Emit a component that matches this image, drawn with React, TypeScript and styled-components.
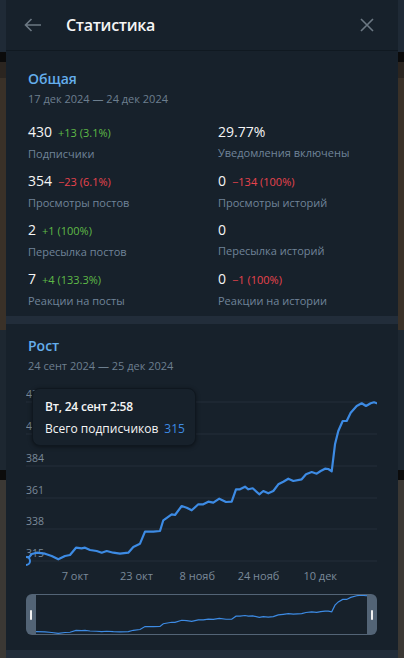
import styled, { createGlobalStyle } from "styled-components";

const GlobalStyle = createGlobalStyle`
  html, body {
    margin: 0;
    padding: 0;
    height: 100%;
    overflow: hidden;
  }

  body {
    font-family: "Open Sans", "DejaVu Sans", sans-serif;
    background: linear-gradient(
      #1f2a36 0 52px,
      #0b0b0b 52px 62px,
      #2b2520 62px 78px,
      #3a3128 78px 330px,
      #1d2731 330px 470px,
      #0c0c0c 470px 480px,
      #3b3834 480px
    );
  }
`;

const BLUE = "#3d8be4";
const PANEL = "#17212b";
const MUTED = "#708499";

const Page = styled.div`
  display: flex;
  justify-content: center;
  height: 658px;
`;

const Panel = styled.div`
  width: 392px;
  background: ${PANEL};
  display: flex;
  flex-direction: column;
  overflow: hidden;
`;

const Header = styled.header`
  height: 52px;
  display: flex;
  align-items: center;
  padding: 0 20px 0 16px;
  border-bottom: 1px solid #101921;
`;

const IconButton = styled.button`
  width: 22px;
  height: 22px;
  padding: 0;
  border: none;
  background: transparent;
  display: flex;
  align-items: center;
  justify-content: center;
  color: #6c7883;
  cursor: pointer;
`;

const Title = styled.h1`
  flex: 1;
  margin: 0 0 0 22px;
  font-size: 16px;
  letter-spacing: -0.3px;
  font-weight: 600;
  color: #f5f5f5;
  line-height: 22px;
`;

const Section = styled.section<{ $top: number }>`
  padding: ${(p) => p.$top}px 0 0;
`;

const SectionTitle = styled.h2`
  margin: 0;
  padding: 0 22px;
  font-size: 14px;
  font-weight: 600;
  line-height: 20px;
  color: #64aeec;
`;

const DateRange = styled.div`
  margin-top: 1px;
  padding: 0 22px;
  font-size: 11px;
  line-height: 17px;
  color: #6d7f8f;
`;

const StatsGrid = styled.div`
  display: grid;
  grid-template-columns: 190px 1fr;
  row-gap: 9px;
  padding: 0 22px 7px;
  margin-top: 15px;
`;

const Stat = styled.div`
  display: flex;
  flex-direction: column;
`;

const StatValue = styled.div`
  display: flex;
  align-items: baseline;
  gap: 6px;
  font-size: 14px;
  line-height: 20px;
  color: #f5f5f5;
`;

const Change = styled.span<{ $negative?: boolean }>`
  font-size: 11px;
  color: ${(p) => (p.$negative ? "#e8434d" : "#5fba47")};
`;

const StatLabel = styled.div`
  margin-top: 2px;
  font-size: 11px;
  line-height: 17px;
  color: ${MUTED};
`;

const SectionGap = styled.div`
  height: 8px;
  background: #222d3a;
  flex-shrink: 0;
`;

const ChartWrap = styled.div`
  position: relative;
  margin: 12px 21px 0 20px;
  height: 200px;
`;

const AxisText = styled.text<{ $size: number }>`
  font-family: "Open Sans", "DejaVu Sans", sans-serif;
  font-size: ${(p) => p.$size}px;
  fill: #7b8a9a;
`;

const Tooltip = styled.div`
  position: absolute;
  left: 6px;
  top: 2px;
  width: 164px;
  box-sizing: border-box;
  padding: 9px 12px 8px;
  background: ${PANEL};
  border: 1px solid #0f171f;
  border-radius: 8px;
  box-shadow: 0 1px 4px rgba(0, 0, 0, 0.45);
  color: #f5f5f5;
  font-size: 12px;
  line-height: 17px;
`;

const TooltipTitle = styled.div`
  font-weight: 600;
  letter-spacing: -0.2px;
`;

const TooltipRow = styled.div`
  margin-top: 5px;
  display: flex;
  gap: 6px;
  white-space: nowrap;
`;

const TooltipValue = styled.span`
  color: ${BLUE};
`;

const Navigator = styled.div`
  display: flex;
  height: 41px;
  margin: 8px 21px 15px 20px;
`;

const Handle = styled.div<{ $side: "left" | "right" }>`
  width: 10px;
  background: #536476;
  border-radius: ${(p) => (p.$side === "left" ? "6px 0 0 6px" : "0 6px 6px 0")};
  display: flex;
  align-items: center;
  justify-content: center;

  &::after {
    content: "";
    width: 2px;
    height: 10px;
    border-radius: 1px;
    background: #f2f2f2;
  }
`;

const NavWindow = styled.div`
  flex: 1;
  border-top: 1px solid #536476;
  border-bottom: 1px solid #536476;
  display: flex;

  svg {
    width: 100%;
    height: 39px;
    display: block;
  }
`;

// chart points in px, relative to the chart box (351 x 200)
const POINTS: [number, number][] = [
  [0, 175], [5.7, 168], [10.7, 166.7], [19, 167.7], [25.7, 170], [32.3, 173.3],
  [39, 170], [44, 169], [50, 161.7], [55.7, 162.3], [59, 161.7], [64, 164],
  [70.7, 165], [75.7, 166.7], [80.7, 165], [87.3, 166.7], [94, 167.7],
  [102.3, 166.7], [107.3, 161], [114, 157.7], [119, 145.7], [127.3, 145.7],
  [134, 145], [137.3, 134.3], [145.7, 128.3], [149, 129], [155.7, 120],
  [160.7, 121.7], [165.7, 124.3], [172.3, 118.3], [177.3, 118.3], [182.3, 115.7],
  [187.3, 116.7], [193.3, 112.7], [200, 116], [205.7, 115.7], [210, 103.3],
  [214, 103.3], [219, 100.7], [222.3, 103.3], [226.7, 102.3], [233.3, 108.3],
  [237.3, 105], [242.3, 107.3], [247.3, 105], [252.3, 98.3], [257.3, 95.7],
  [262.3, 92.7], [267.3, 95], [275.7, 93.3], [280, 88.3], [285.7, 86],
  [290.7, 87.7], [294.7, 85], [299, 82.7], [302.3, 83], [305.7, 85.3],
  [309, 58.3], [312.3, 45], [316.7, 35], [320.7, 35], [324.7, 26.7],
  [330.7, 20], [335.7, 17.3], [340, 20], [344.7, 17.3], [348, 16.3], [351, 17.3],
];

const GRID = [
  { y: 16, label: "430" },
  { y: 48, label: "407" },
  { y: 80, label: "384" },
  { y: 112, label: "361" },
  { y: 143, label: "338" },
  { y: 175, label: "315" },
];

const X_LABELS = [
  { x: 49, label: "7 окт" },
  { x: 110.5, label: "23 окт" },
  { x: 171.3, label: "8 нояб" },
  { x: 232.5, label: "24 нояб" },
  { x: 294.2, label: "10 дек" },
];

const STATS = [
  { value: "430", change: "+13 (3.1%)", label: "Подписчики" },
  { value: "29.77%", label: "Уведомления включены" },
  { value: "354", change: "−23 (6.1%)", negative: true, label: "Просмотры постов" },
  { value: "0", change: "−134 (100%)", negative: true, label: "Просмотры историй" },
  { value: "2", change: "+1 (100%)", label: "Пересылка постов" },
  { value: "0", label: "Пересылка историй" },
  { value: "7", change: "+4 (133.3%)", label: "Реакции на посты" },
  { value: "0", change: "−1 (100%)", negative: true, label: "Реакции на истории" },
];

const toPath = (pts: [number, number][]) =>
  pts.map(([x, y], i) => `${i ? "L" : "M"}${x} ${y}`).join(" ");

function GrowthChart() {
  return (
    <svg width="351" height="200" viewBox="0 0 351 200">
      {GRID.map((g) => (
        <g key={g.label}>
          <line x1="0" x2="351" y1={g.y} y2={g.y} stroke="#242f3b" strokeWidth="1" />
          <AxisText $size={10.5} x="0" y={g.y - 4}>
            {g.label}
          </AxisText>
        </g>
      ))}
      <path
        d={toPath(POINTS)}
        fill="none"
        stroke={BLUE}
        strokeWidth="2.2"
        strokeLinejoin="round"
        strokeLinecap="round"
      />
      <circle cx="0" cy="175" r="4" fill={PANEL} stroke={BLUE} strokeWidth="2" />
      {X_LABELS.map((l) => (
        <AxisText $size={11} key={l.label} x={l.x} y="194" textAnchor="middle">
          {l.label}
        </AxisText>
      ))}
    </svg>
  );
}

function MiniChart() {
  const mini = POINTS.map(([x, y]) => [x, (y - 17) * 0.245] as [number, number]);
  return (
    <svg viewBox="10 0 331 39" preserveAspectRatio="none">
      <path d={toPath(mini)} fill="none" stroke={BLUE} strokeWidth="1.2" vectorEffect="non-scaling-stroke" />
    </svg>
  );
}

function App() {
  return (
    <>
      <GlobalStyle />
      <Page>
        <Panel>
          <Header>
            <IconButton aria-label="Назад">
              <svg width="18" height="14" viewBox="0 0 18 14" fill="none" stroke="currentColor" strokeWidth="1.6">
                <path d="M17 7H1.5M7.5 1L1.5 7l6 6" />
              </svg>
            </IconButton>
            <Title>Статистика</Title>
            <IconButton aria-label="Закрыть">
              <svg width="14" height="14" viewBox="0 0 14 14" stroke="currentColor" strokeWidth="1.6">
                <path d="M1 1l12 12M13 1L1 13" />
              </svg>
            </IconButton>
          </Header>

          <Section $top={18}>
            <SectionTitle>Общая</SectionTitle>
            <DateRange>17 дек 2024 — 24 дек 2024</DateRange>
            <StatsGrid>
              {STATS.map((s) => (
                <Stat key={s.label}>
                  <StatValue>
                    {s.value}
                    {s.change && <Change $negative={s.negative}>{s.change}</Change>}
                  </StatValue>
                  <StatLabel>{s.label}</StatLabel>
                </Stat>
              ))}
            </StatsGrid>
          </Section>

          <SectionGap />

          <Section $top={12}>
            <SectionTitle>Рост</SectionTitle>
            <DateRange>24 сент 2024 — 25 дек 2024</DateRange>
            <ChartWrap>
              <GrowthChart />
              <Tooltip>
                <TooltipTitle>Вт, 24 сент 2:58</TooltipTitle>
                <TooltipRow>
                  Всего подписчиков <TooltipValue>315</TooltipValue>
                </TooltipRow>
              </Tooltip>
            </ChartWrap>
            <Navigator>
              <Handle $side="left" />
              <NavWindow>
                <MiniChart />
              </NavWindow>
              <Handle $side="right" />
            </Navigator>
          </Section>

          <SectionGap />
        </Panel>
      </Page>
    </>
  );
}

export default App;
